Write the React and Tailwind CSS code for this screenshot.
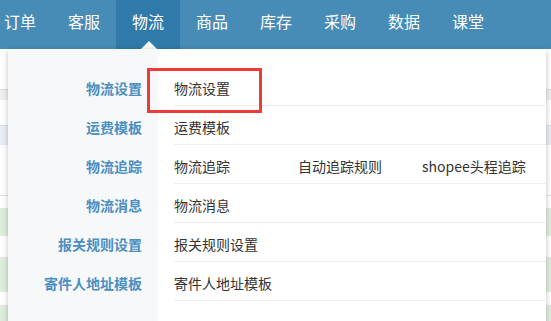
import React from 'react';

const navItems = ['订单', '客服', '物流', '商品', '库存', '采购', '数据', '课堂'];

const menuRows = [
  { label: '物流设置', links: ['物流设置'] },
  { label: '运费模板', links: ['运费模板'] },
  { label: '物流追踪', links: ['物流追踪', '自动追踪规则', 'shopee头程追踪'] },
  { label: '物流消息', links: ['物流消息'] },
  { label: '报关规则设置', links: ['报关规则设置'] },
  { label: '寄件人地址模板', links: ['寄件人地址模板'] },
];

// rows of the table that sits behind the dropdown
const bgRows = [
  'h-[40px] bg-white',
  'h-[11px] bg-[#efefef] border-t border-[#dcdcdc]',
  'h-[25px] bg-white',
  'h-[20px] bg-[#e9edf4] border-t border-[#e2e2e2]',
  'h-[50px] bg-white',
  'h-[13px] bg-white border-t border-[#e2e2e2]',
  'h-[28px] bg-[#dfeedc]',
  'h-[22px] bg-white border-b border-[#e6e6e6]',
  'h-[34px] bg-[#dfeedc]',
  'h-[14px] bg-white border-b border-[#e6e6e6]',
  'h-[30px] bg-[#dfeedc]',
];

const App = () => {
  return (
    <div
      className="relative w-[551px] h-[321px] overflow-hidden bg-white"
      style={{ fontFamily: '"Noto Sans CJK SC", "Microsoft YaHei", sans-serif' }}
    >
      {/* Top nav */}
      <div className="h-[49px] bg-[#468cb6] flex ml-[-12px]">
        {navItems.map((item) => (
          <div
            key={item}
            className={`w-16 h-[49px] pt-[9px] flex justify-center text-[16px] leading-[24px] text-white ${
              item === '物流' ? 'bg-[#2f7aa8]' : ''
            }`}
          >
            {item}
          </div>
        ))}
      </div>

      {/* Table in the background */}
      <div className="flex flex-col">
        {bgRows.map((cls, idx) => (
          <div key={idx} className={cls} />
        ))}
      </div>

      {/* Caret under active tab */}
      <div className="absolute left-[141px] top-[41px] w-0 h-0 border-x-8 border-x-transparent border-b-8 border-b-[#f7f8fa]" />

      {/* Dropdown */}
      <div className="absolute left-[8px] top-[49px] w-[538px] h-[300px] flex bg-white shadow-[0_2px_6px_rgba(0,0,0,0.25)]">
        <div className="w-[150px] bg-[#f7f8fa] pt-[18px] pr-4">
          {menuRows.map((row) => (
            <div
              key={row.label}
              className="h-[39px] pt-[3px] flex items-center justify-end text-[14px] leading-[20px] font-bold text-[#4a8fc2]"
            >
              {row.label}
            </div>
          ))}
        </div>
        <div className="flex-1 pt-[18px] pl-4">
          {menuRows.map((row) => (
            <div
              key={row.label}
              className="h-[39px] pt-[3px] flex items-center border-b border-[#eeeeee] text-[14px] leading-[20px] text-[#333333]"
            >
              {row.links.map((link) => (
                <span key={link} className="w-[124px] whitespace-nowrap">
                  {link}
                </span>
              ))}
            </div>
          ))}
        </div>
      </div>

      {/* Red highlight box */}
      <div className="absolute left-[147px] top-[68px] w-[115px] h-[45px] border-[3px] border-[#ef3a3a]" />
    </div>
  );
};

export default App;
